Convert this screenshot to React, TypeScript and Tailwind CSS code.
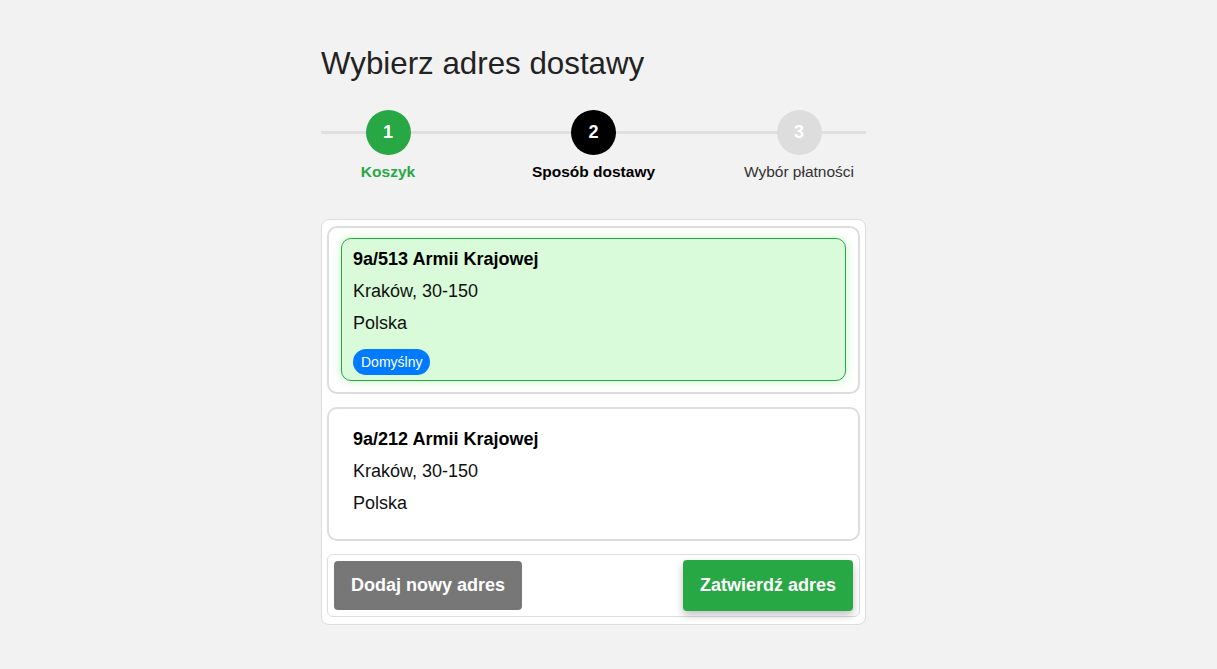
import React from "react";

type Step = { n: number; label: string; state: "done" | "active" | "todo" };

const steps: Step[] = [
  { n: 1, label: "Koszyk", state: "done" },
  { n: 2, label: "Sposób dostawy", state: "active" },
  { n: 3, label: "Wybór płatności", state: "todo" },
];

const circleCls = {
  done: "bg-[#28a745]",
  active: "bg-black",
  todo: "bg-[#dddddd]",
};

const labelCls = {
  done: "font-bold text-[#28a745]",
  active: "font-bold text-black",
  todo: "text-[#333333]",
};

function Stepper() {
  return (
    <div className="relative mt-[28px] flex justify-between">
      <div className="absolute left-0 right-0 top-[21px] h-[3px] bg-[#e0e0e0]" />
      {steps.map((s) => (
        <div key={s.n} className="relative flex w-[134px] flex-col items-center">
          <div
            className={`flex h-[45px] w-[45px] items-center justify-center rounded-full text-[18px] font-bold text-white ${circleCls[s.state]}`}
          >
            {s.n}
          </div>
          <div className={`mt-[8px] text-[15.5px] leading-[18px] ${labelCls[s.state]}`}>{s.label}</div>
        </div>
      ))}
    </div>
  );
}

export default function App() {
  return (
    <div className="min-h-screen bg-[#f2f2f2] font-['Liberation_Sans',Arial,sans-serif]">
      <div className="mx-auto w-[575px] pt-[45px]">
        <div className="w-[545px]">
          <h1 className="text-[31.3px] leading-[37px] text-[#222222]">Wybierz adres dostawy</h1>

          <Stepper />

          <div className="mt-[38px] flex flex-col gap-[13px] rounded-[8px] border border-[#dddddd] bg-white px-[5px] pb-[7px] pt-[6px]">
            {/* selected address */}
            <div className="rounded-[10px] border-2 border-[#dddddd] bg-white px-[12px] pb-[11px] pt-[10px]">
              <div className="rounded-[10px] border border-[#28a745] bg-[#d9fbd9] px-[11px] pb-[5px] pt-[4px] shadow-[0_0_10px_rgba(150,240,150,0.55)]">
                <p className="text-[18px] font-bold leading-8 text-black">9a/513 Armii Krajowej</p>
                <p className="text-[18px] leading-8 text-[#111111]">Kraków, 30-150</p>
                <p className="text-[18px] leading-8 text-[#111111]">Polska</p>
                <span className="mt-[10px] inline-flex h-[26px] items-center rounded-full bg-[#007bff] px-[8px] text-[14px] text-white">
                  Domyślny
                </span>
              </div>
            </div>

            {/* other address */}
            <div className="rounded-[10px] border-2 border-[#dddddd] bg-white px-[24px] pb-[19px] pt-[14px]">
              <p className="text-[18px] font-bold leading-8 text-black">9a/212 Armii Krajowej</p>
              <p className="text-[18px] leading-8 text-[#111111]">Kraków, 30-150</p>
              <p className="text-[18px] leading-[33px] text-[#111111]">Polska</p>
            </div>

            <div className="flex items-center justify-between rounded-[6px] border border-[#dddddd] bg-white px-[6px] py-[5px]">
              <button className="h-[49px] rounded-[4px] bg-[#777777] px-[17px] text-[18px] font-bold text-white">
                Dodaj nowy adres
              </button>
              <button className="h-[51px] rounded-[4px] bg-[#28a745] px-[17px] text-[18px] font-bold text-white shadow-[0_4px_8px_rgba(0,0,0,0.25)]">
                Zatwierdź adres
              </button>
            </div>
          </div>
        </div>
      </div>
    </div>
  );
}
